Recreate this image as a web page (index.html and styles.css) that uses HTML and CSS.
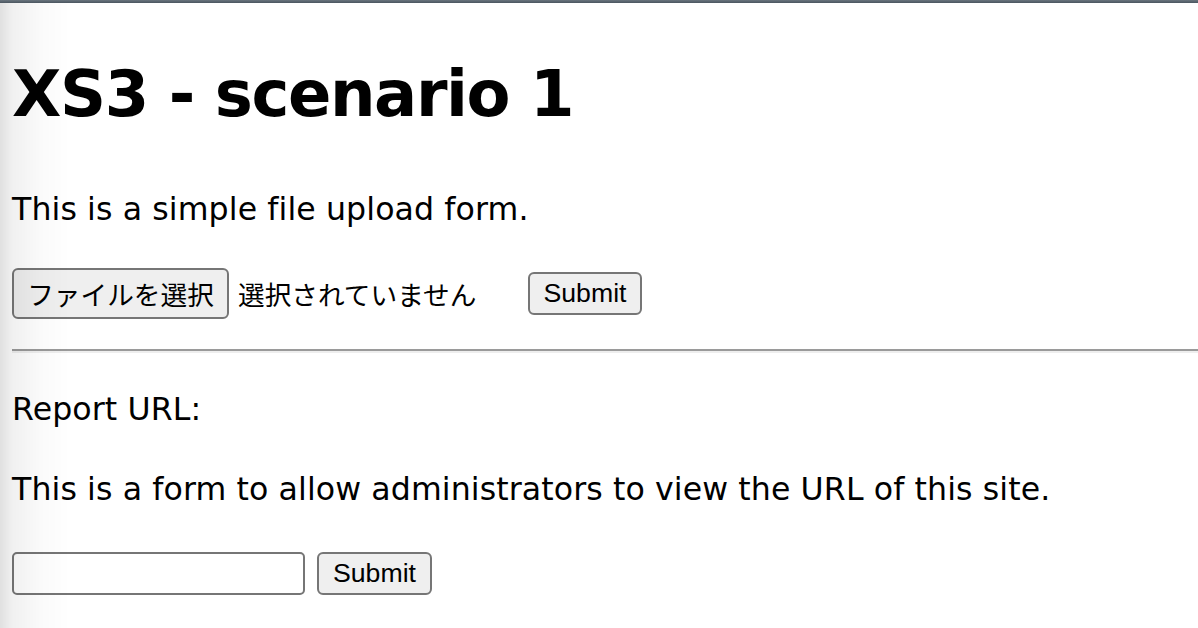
FILE: index.html
```html
<!DOCTYPE html>
<html lang="ja">
<head>
<meta charset="utf-8">
<title>XS3 - scenario 1</title>
<link rel="stylesheet" href="styles.css">
</head>
<body>
<div class="topbar"></div>
<main class="page">
  <h1 class="title">XS3 - scenario 1</h1>
  <p class="text">This is a simple file upload form.</p>
  <form class="row upload-row">
    <div class="file-input">
      <span class="btn btn-file">ファイルを選択</span>
      <span class="file-label">選択されていません</span>
    </div>
    <button type="button" class="btn btn-submit">Submit</button>
  </form>
  <hr class="rule">
  <p class="text">Report URL:</p>
  <p class="text">This is a form to allow administrators to view the URL of this site.</p>
  <form class="row url-row">
    <input type="text" class="url-input">
    <button type="button" class="btn btn-submit">Submit</button>
  </form>
</main>
<div class="edge-shadow"></div>
</body>
</html>
```
FILE: styles.css
```css
html, body {
  margin: 0;
  padding: 0;
  background: #ffffff;
  overflow: hidden;
}

body {
  font-family: "DejaVu Sans", "Noto Sans CJK JP", sans-serif;
  color: #000;
  width: 1198px;
  height: 628px;
}

.topbar {
  height: 3px;
  background: linear-gradient(#6a757e, #4a555f);
}

.page {
  padding-left: 12px;
}

.title {
  margin: 43px 0;
  font-size: 64px;
  letter-spacing: -1.4px;
  line-height: 96px;
  font-weight: bold;
}

.text {
  margin: 32px 0;
  font-size: 31.6px;
  letter-spacing: 0.1px;
  line-height: 48px;
}

.row {
  display: flex;
  align-items: center;
  height: 56px;
  margin: 0;
}

.file-input {
  display: flex;
  align-items: center;
  width: 516px;
  gap: 9px;
}

.btn {
  box-sizing: border-box;
  display: flex;
  align-items: center;
  justify-content: center;
  font-family: "Liberation Sans", "Noto Sans CJK JP", sans-serif;
  font-size: 26.67px;
  color: #000;
  background: #efefef;
  border: 2px solid #767676;
  border-radius: 6px;
  padding: 0;
}

.btn-file {
  width: 217px;
  height: 51px;
}

.file-label {
  font-family: "Noto Sans CJK JP", sans-serif;
  font-size: 26.67px;
}

.btn-submit {
  width: 114px;
  height: 43px;
}

.url-row {
  gap: 12px;
}

.url-input {
  box-sizing: border-box;
  width: 293px;
  height: 43px;
  border: 2px solid #767676;
  border-radius: 5px;
  background: #fff;
  margin: 0;
}

.url-row .btn-submit {
  width: 115px;
}

.rule {
  margin: 28px 0 0;
  height: 0;
  border: 0;
  border-top: 2px solid #9a9a9a;
  border-bottom: 2px solid #eeeeee;
}

.edge-shadow {
  position: fixed;
  left: 0;
  top: 3px;
  bottom: 0;
  width: 70px;
  pointer-events: none;
  background: linear-gradient(to right, rgba(0,0,0,0.12) 0, rgba(0,0,0,0.06) 12px, rgba(0,0,0,0.02) 40px, rgba(0,0,0,0) 70px);
}
```
